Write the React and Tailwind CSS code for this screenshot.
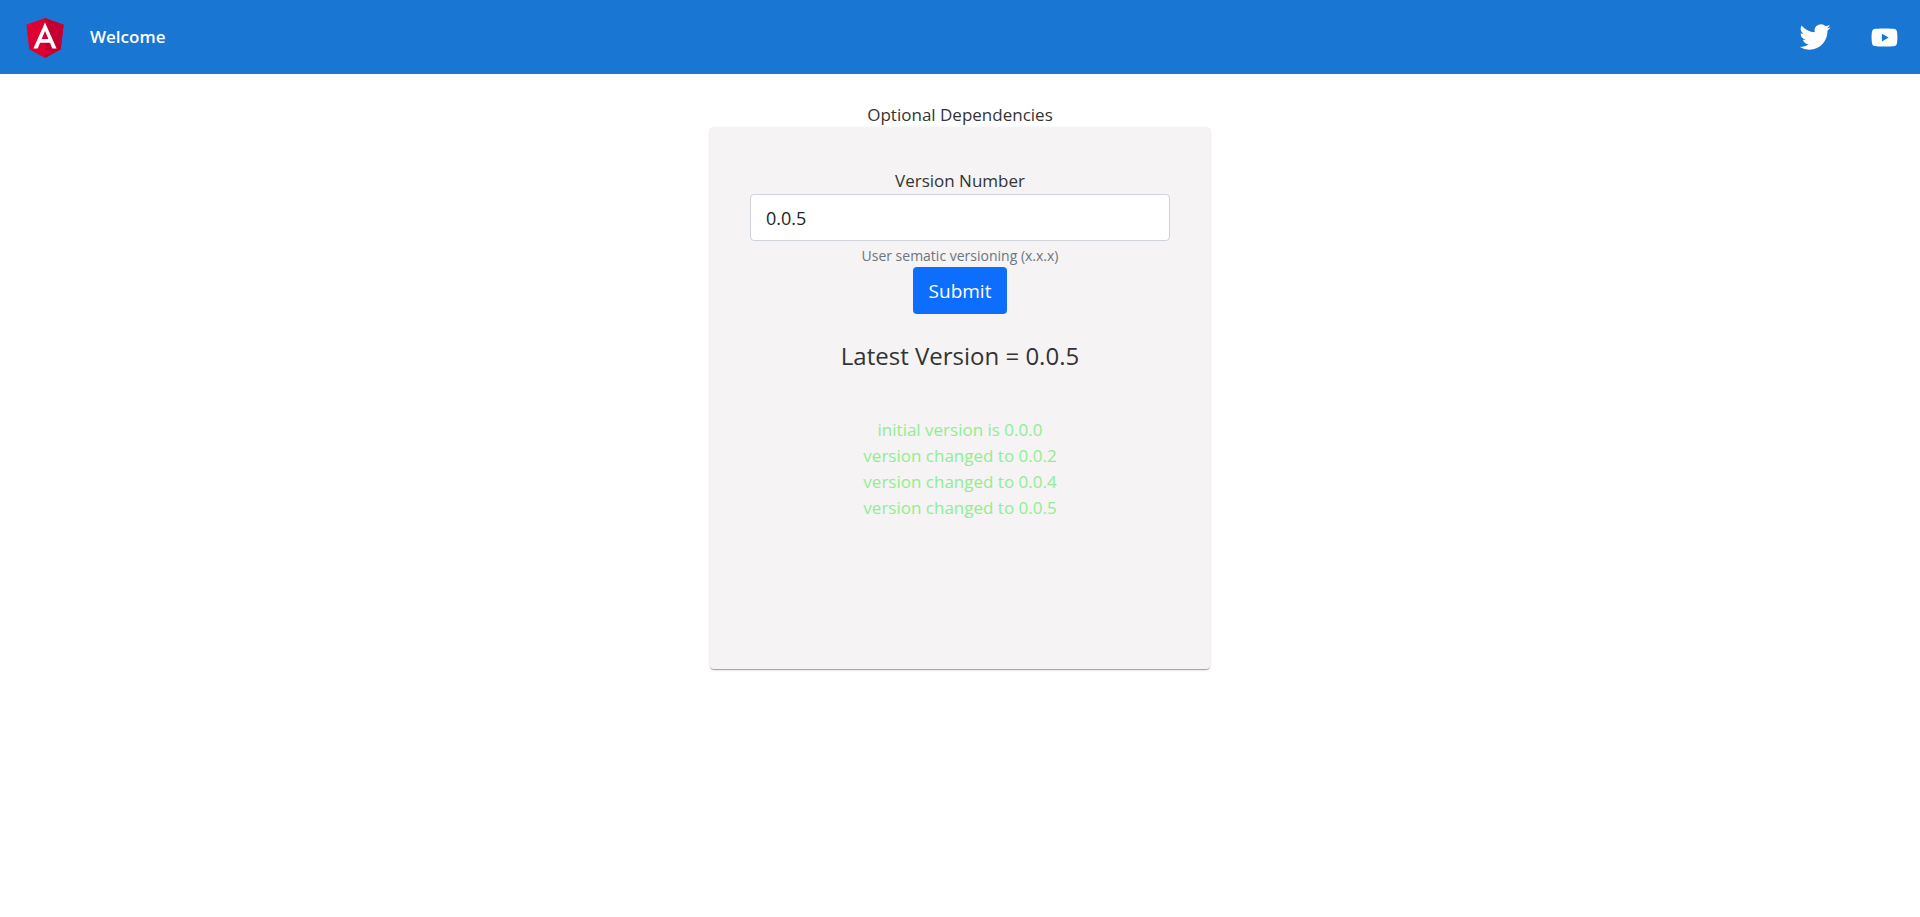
import { useState } from "react";

function AngularLogo() {
  return (
    <svg viewBox="0 0 250 250" className="size-[50px]" role="img" aria-label="Angular Logo">
      <path fill="#dd0031" d="M125 30 31.9 63.2l14.2 123.1L125 230l78.9-43.7 14.2-123.1z" />
      <path fill="#c3002f" d="M125 30v22.2-.1V230l78.9-43.7 14.2-123.1L125 30z" />
      <path
        fill="#fff"
        d="M125 52.1 66.8 182.6h21.7l11.7-29.2h49.4l11.7 29.2H183L125 52.1zm17 83.3h-34l17-40.9 17 40.9z"
      />
    </svg>
  );
}

function TwitterIcon() {
  return (
    <svg viewBox="0 0 400 400" className="size-[50px]" aria-hidden="true">
      <path
        fill="#fff"
        d="M153.62,301.59c94.34,0,145.94-78.16,145.94-145.94,0-2.22,0-4.43-.15-6.63A104.36,104.36,0,0,0,325,122.47a102.38,102.38,0,0,1-29.46,8.07,51.47,51.47,0,0,0,22.55-28.37,102.79,102.79,0,0,1-32.57,12.45,51.34,51.34,0,0,0-87.41,46.78A145.62,145.62,0,0,1,92.4,107.81a51.33,51.33,0,0,0,15.88,68.47A50.91,50.91,0,0,1,85,169.86c0,.21,0,.43,0,.65a51.31,51.31,0,0,0,41.15,50.28,51.21,51.21,0,0,1-23.16.88,51.35,51.35,0,0,0,47.92,35.62,102.92,102.92,0,0,1-63.7,22A104.41,104.41,0,0,1,75,278.55a145.21,145.21,0,0,0,78.62,23"
      />
    </svg>
  );
}

function YoutubeIcon() {
  return (
    <svg viewBox="0 0 24 24" className="size-[31px]" aria-hidden="true">
      <path
        fill="#fff"
        d="M21.58 7.19c-.23-.86-.91-1.54-1.77-1.77C18.25 5 12 5 12 5s-6.25 0-7.81.42c-.86.23-1.54.91-1.77 1.77C2 8.75 2 12 2 12s0 3.25.42 4.81c.23.86.91 1.54 1.77 1.77C5.75 19 12 19 12 19s6.25 0 7.81-.42c.86-.23 1.54-.91 1.77-1.77C22 15.25 22 12 22 12s0-3.25-.42-4.81zM10 15V9l5.2 3-5.2 3z"
      />
    </svg>
  );
}

export default function App() {
  const [draft, setDraft] = useState("0.0.5");
  const [version, setVersion] = useState("0.0.5");
  const [log, setLog] = useState([
    "initial version is 0.0.0",
    "version changed to 0.0.2",
    "version changed to 0.0.4",
    "version changed to 0.0.5",
  ]);

  function submit(event) {
    event.preventDefault();
    if (draft === version) return;
    setVersion(draft);
    setLog([...log, `version changed to ${draft}`]);
  }

  return (
    <div className="min-h-screen bg-white font-['Open_Sans','Noto_Sans',sans-serif] text-[17px] leading-[26px] text-[#333333]">
      <header className="flex h-[74px] items-center bg-[#1976d2] px-5 font-semibold text-white">
        <AngularLogo />
        <span className="ml-5">Welcome</span>
        <div className="flex-1" />
        <a href="#twitter" aria-label="Twitter">
          <TwitterIcon />
        </a>
        <a href="#youtube" aria-label="YouTube" className="ml-[29px]">
          <YoutubeIcon />
        </a>
      </header>

      <main className="flex flex-col items-center pt-[29px] pb-10">
        <p className="leading-6">Optional Dependencies</p>
        <section className="flex min-h-[542px] w-[500px] max-w-full flex-col items-center rounded-[4px] bg-[#f5f3f4] px-10 pt-[41px] pb-10 shadow-[0_2px_1px_-1px_rgba(0,0,0,0.2),0_1px_1px_0_rgba(0,0,0,0.14),0_1px_3px_0_rgba(0,0,0,0.12)]">
          <form onSubmit={submit} className="flex w-full flex-col items-center">
            <label htmlFor="version">Version Number</label>
            <input
              id="version"
              type="text"
              value={draft}
              onChange={(event) => setDraft(event.target.value)}
              aria-describedby="version-help"
              className="h-[47px] w-full rounded-[4px] border border-[#ced4da] bg-white px-[15px] text-lg text-[#212529]"
            />
            <small id="version-help" className="mt-1 text-sm leading-[22px] text-[#6c757d]">
              User sematic versioning (x.x.x)
            </small>
            <button
              type="submit"
              className="h-[47px] rounded-[4px] bg-[#0d6efd] px-4 text-[19px] text-white"
            >
              Submit
            </button>
          </form>
          <h1 className="mt-[26px] text-2xl">Latest Version = {version}</h1>
          <ul className="mt-[45px] text-center text-[#90ee90]">
            {log.map((entry, index) => (
              <li key={index}>{entry}</li>
            ))}
          </ul>
        </section>
      </main>
    </div>
  );
}
